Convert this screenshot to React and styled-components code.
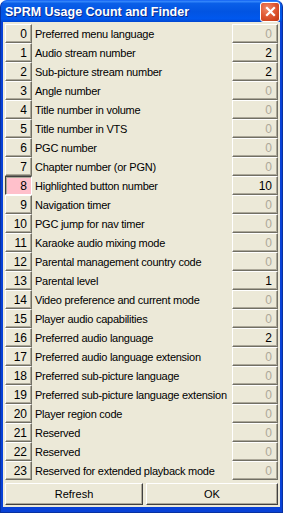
import React from 'react'
import styled, { createGlobalStyle } from 'styled-components'

const GlobalStyle = createGlobalStyle`
  html, body {
    margin: 0;
    padding: 0;
    background: #ffffff;
  }
  body {
    font-family: "Liberation Sans", Arial, sans-serif;
    font-size: 11px;
  }
`

const Window = styled.div`
  width: 283px;
  height: 513px;
  box-sizing: border-box;
  display: flex;
  flex-direction: column;
  background: #0841d6;
  border-radius: 7px 7px 0 0;
  border: 1px solid #0831a0;
  border-top-color: #1c6cf5;
  overflow: hidden;
`

const TitleBar = styled.div`
  height: 21px;
  flex: none;
  display: flex;
  align-items: center;
  justify-content: space-between;
  padding: 0 2px 0 4px;
  background: linear-gradient(to bottom, #3a8cfe 0%, #0a5fe8 12%, #0254e2 50%, #0058ee 85%, #0145cf 100%);
`

const Title = styled.span`
  color: #ffffff;
  font-family: "Liberation Sans", Arial, sans-serif;
  font-weight: bold;
  font-size: 12.5px;
  text-shadow: 1px 1px 0 #0a2a8a;
`

const CloseButton = styled.div`
  width: 20px;
  height: 20px;
  box-sizing: border-box;
  border: 1px solid #ffffff;
  border-radius: 3px;
  background: radial-gradient(circle at 35% 30%, #f08a6a 0%, #e05a35 45%, #c2350f 100%);
  display: flex;
  align-items: center;
  justify-content: center;
`

const Body = styled.div`
  flex: 1;
  margin: 0 2px 5px 2px;
  background: #ece9d8;
  padding: 2px 2px 2px 2px;
  display: flex;
  flex-direction: column;
`

const Row = styled.div`
  display: grid;
  grid-template-columns: 27px 1fr 46px;
  column-gap: 3px;
  height: 19px;
`

const NumCell = styled.div`
  box-sizing: border-box;
  height: 19px;
  display: flex;
  align-items: center;
  justify-content: flex-end;
  padding-right: 4px;
  color: #000000;
  font-size: 12px;
  background: ${p => (p.$active ? '#ffc0cb' : '#ece9d8')};
  border-style: solid;
  border-width: 1px;
  border-color: ${p =>
    p.$active ? '#404040 #ffffff #ffffff #404040' : '#ffffff #716f64 #716f64 #ffffff'};
  box-shadow: ${p => (p.$active ? 'inset 1px 1px 0 #aca899' : 'inset -1px -1px 0 #aca899')};
`

const Label = styled.div`
  display: flex;
  align-items: center;
  color: #000000;
  white-space: nowrap;
  letter-spacing: -0.25px;
`

const ValueCell = styled(NumCell)`
  padding-right: 5px;
  color: ${p => (p.$zero ? '#aca899' : '#000000')};
  background: #ece9d8;
  border-color: #ffffff #716f64 #716f64 #ffffff;
  box-shadow: inset -1px -1px 0 #aca899;
`

const ButtonRow = styled.div`
  display: grid;
  grid-template-columns: 138px 1fr;
  column-gap: 3px;
  margin-top: 3px;
`

const Button = styled.button`
  height: 22px;
  box-sizing: border-box;
  font-family: "Liberation Sans", Arial, sans-serif;
  font-size: 11px;
  color: #000000;
  background: #ece9d8;
  border-style: solid;
  border-width: 1px;
  border-color: #ffffff #404040 #404040 #ffffff;
  box-shadow: inset -1px -1px 0 #aca899;
  padding: 0;
`

const rows = [
  ['Preferred menu language', 0],
  ['Audio stream number', 2],
  ['Sub-picture stream number', 2],
  ['Angle number', 0],
  ['Title number in volume', 0],
  ['Title number in VTS', 0],
  ['PGC number', 0],
  ['Chapter number (or PGN)', 0],
  ['Highlighted button number', 10],
  ['Navigation timer', 0],
  ['PGC jump for nav timer', 0],
  ['Karaoke audio mixing mode', 0],
  ['Parental management country code', 0],
  ['Parental level', 1],
  ['Video preference and current mode', 0],
  ['Player audio capabilities', 0],
  ['Preferred audio language', 2],
  ['Preferred audio language extension', 0],
  ['Preferred sub-picture language', 0],
  ['Preferred sub-picture language extension', 0],
  ['Player region code', 0],
  ['Reserved', 0],
  ['Reserved', 0],
  ['Reserved for extended playback mode', 0],
]

export default function App() {
  return (
    <>
      <GlobalStyle />
      <Window>
        <TitleBar>
          <Title>SPRM Usage Count and Finder</Title>
          <CloseButton>
            <svg width="11" height="11" viewBox="0 0 11 11">
              <path d="M2 2 L9 9 M9 2 L2 9" stroke="#ffffff" strokeWidth="2.2" strokeLinecap="square" />
            </svg>
          </CloseButton>
        </TitleBar>
        <Body>
          {rows.map(([label, value], i) => (
            <Row key={i}>
              <NumCell $active={i === 8}>{i}</NumCell>
              <Label>{label}</Label>
              <ValueCell $zero={value === 0}>{value}</ValueCell>
            </Row>
          ))}
          <ButtonRow>
            <Button>Refresh</Button>
            <Button>OK</Button>
          </ButtonRow>
        </Body>
      </Window>
    </>
  )
}
